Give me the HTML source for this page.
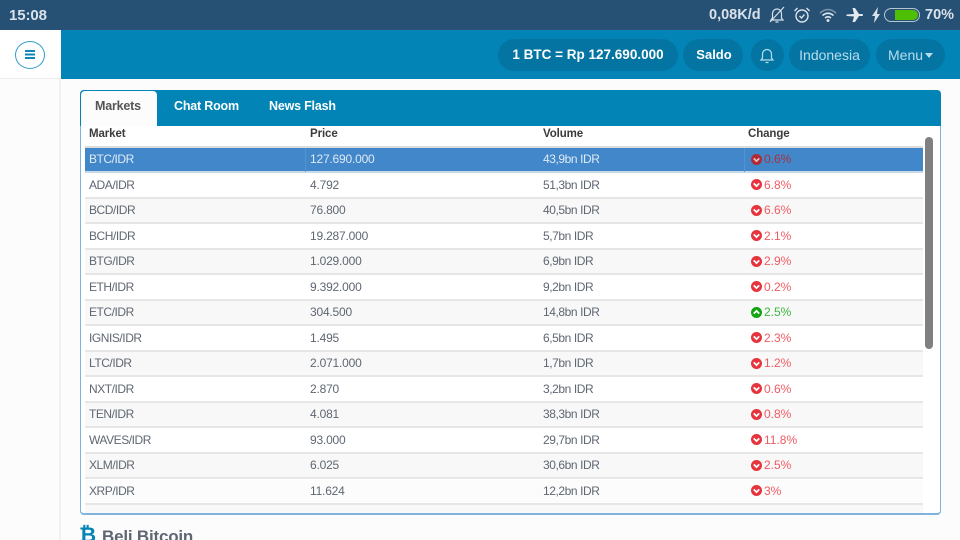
<!DOCTYPE html>
<html><head><meta charset="utf-8">
<style>
html,body{margin:0;padding:0;width:960px;height:540px;overflow:hidden}
body{background:#fcfcfc;font-family:"Liberation Sans",sans-serif;color:#5f6772;font-size:12px}
#w{position:absolute;left:0;top:0;width:960px;height:540px;overflow:hidden}
.a{position:absolute}
.pill{position:absolute;top:39px;height:32px;border-radius:16px;background:#0475a3;line-height:32px;text-align:center;font-size:13.5px;color:#fff;font-weight:bold}
.pill.l{font-weight:normal;color:#b9dcec;font-size:14px}
.row{position:absolute;left:85px;width:838px;height:25.45px;box-sizing:border-box;border-bottom:2px solid #e6e6e6}
.row.o{background:#f8f8f8}
.row span{position:absolute;top:0;line-height:22px;white-space:nowrap}
.row .m{left:4px;letter-spacing:-.45px}.row .p{left:225px;letter-spacing:-.2px}.row .v{left:458px;letter-spacing:-.42px}
.row .c{left:679px;color:#ef5b63}
.row .c.g{color:#3fb53f}
.row svg{position:absolute;left:666px;top:5.5px;width:11px;height:11px}
.row.sel{background:#4287c9;color:#dfeaf5;border-bottom:2px solid #c9d9e8}
.row.sel .c{color:#a8323f}
.th{position:absolute;top:126px;font-size:11.5px;font-weight:bold;color:#3c3c3c;line-height:14px;letter-spacing:-.1px}
.tab{position:absolute;top:99px;font-size:12.5px;font-weight:bold;color:#fff;line-height:14px;letter-spacing:-.2px}
</style></head><body><div id="w">
<!-- status bar -->
<div class="a" style="left:0;top:0;width:960px;height:30px;background:#265074"></div>
<div class="a" style="left:9px;top:7px;font-size:15px;font-weight:bold;color:#d9e2ea;line-height:17px;letter-spacing:-.1px">15:08</div>
<div class="a" style="left:709px;top:7px;font-size:14.5px;font-weight:bold;color:#d9e2ea;line-height:17px">0,08K/d</div>
<svg class="a" style="left:768px;top:6px" width="18" height="18" viewBox="0 0 18 18" fill="none" stroke="#d9e2ea" stroke-width="1.2"><path d="M3 14h12l-1.5-2V7.500C13.500 5 11.500 3 9 3S4.500 5 4.500 7.500V12z"/><path d="M7.500 16h3M2 16L16 1"/></svg>
<svg class="a" style="left:793px;top:6px" width="18" height="18" viewBox="0 0 18 18" fill="none" stroke="#d9e2ea" stroke-width="1.4"><circle cx="9" cy="10" r="6"/><path d="M6.500 10l2 2 3-3.500M1.500 5L4.500 2M16.500 5l-3-3"/></svg>
<svg class="a" style="left:818px;top:7px" width="20" height="16" viewBox="0 0 20 16" fill="none"><path d="M2 6Q10-1 18 6" stroke="#7f98ad" stroke-width="1.500"/><path d="M4.500 8.500Q10 4 15.500 8.500" stroke="#d9e2ea" stroke-width="1.700"/><path d="M7 11Q10 8.500 13 11" stroke="#d9e2ea" stroke-width="1.700"/><circle cx="10" cy="13.500" r="1.500" fill="#d9e2ea"/></svg>
<svg class="a" style="left:846px;top:6px" width="18" height="18" viewBox="0 0 18 18" fill="#e4eaef"><path d="M0.500 8.500L8 8 6.500 2H9l4 6h3.500q1 1 0 2H13l-4 6H6.500L8 10.500 0.500 10z"/></svg>
<svg class="a" style="left:871px;top:7px" width="10" height="16" viewBox="0 0 10 16" fill="#d9e2ea"><path d="M7 0L1 9h3L3 16l6-9H6z"/></svg>
<div class="a" style="left:884px;top:8px;width:36px;height:14px;box-sizing:border-box;border:1.500px solid #b5c5d2;border-radius:7px"></div>
<div class="a" style="left:895px;top:10px;width:23px;height:10px;background:#4fbf06;border-radius:0 5px 5px 0"></div>
<div class="a" style="left:925px;top:7px;font-size:14.500px;font-weight:bold;color:#d9e2ea;line-height:17px">70%</div>
<!-- header -->
<div class="a" style="left:0;top:30px;width:61px;height:49px;background:#fff;border-bottom:1px solid #eee;box-sizing:border-box"></div>
<div class="a" style="left:61px;top:30px;width:899px;height:49px;background:#0284b6"></div>
<div class="a" style="left:59px;top:79px;width:2px;height:461px;background:#f1f1f1"></div>
<div class="a" style="left:15px;top:41px;width:30px;height:28px;box-sizing:border-box;border:1.500px solid #2f9ccb;border-radius:50%"></div>
<div class="a" style="left:25px;top:50px;width:10px;height:2px;background:#0c86bb;box-shadow:0 3.500px 0 #0c86bb,0 7px 0 #0c86bb"></div>
<div class="pill" style="left:498px;width:180px">1 BTC = Rp 127.690.000</div>
<div class="pill" style="left:683px;width:60px;font-size:13px;padding-left:2px;box-sizing:border-box">Saldo</div>
<div class="pill" style="left:751px;width:33px"></div>
<svg class="a" style="left:759px;top:47px" width="16" height="17" viewBox="0 0 16 17" fill="none" stroke="#b9dcec" stroke-width="1.200"><path d="M2 13h12l-1.500-2V7C12.500 4.500 10.500 2.500 8 2.500S3.500 4.500 3.500 7v4z"/><path d="M6.500 15.500h3"/></svg>
<div class="pill l" style="left:789px;width:81px">Indonesia</div>
<div class="pill l" style="left:876px;width:69px;text-align:left;padding-left:12px;box-sizing:border-box">Menu</div>
<div class="a" style="left:925px;top:53px;width:0;height:0;border-left:4.500px solid transparent;border-right:4.500px solid transparent;border-top:5px solid #b9dcec"></div>
<!-- panel -->
<div class="a" style="left:80px;top:90px;width:861px;height:425px;box-sizing:border-box;border:1px solid #7fb2dc;border-bottom:2px solid #7fb2dc;border-radius:4px;background:#fff"></div>
<div class="th" style="left:89px;top:127px">Market</div>
<div class="th" style="left:310px;top:127px">Price</div>
<div class="th" style="left:543px;top:127px">Volume</div>
<div class="th" style="left:748px;top:127px">Change</div>
<div class="a" style="left:80px;top:90px;width:861px;height:36px;background:#0284b6;border-radius:4px 4px 0 0"></div>
<div class="a" style="left:81px;top:91px;width:76px;height:35px;background:#fcfcfc;border-radius:4px 4px 0 0"></div>
<div class="tab" style="left:95px;color:#555">Markets</div>
<div class="tab" style="left:174px">Chat Room</div>
<div class="tab" style="left:269px">News Flash</div>
<div class="a" style="left:85px;top:146px;width:838px;height:2px;background:#dcdcdc"></div>

<div class="row sel" style="top:148px"><span class="m">BTC/IDR</span><span class="p">127.690.000</span><span class="v">43,9bn IDR</span><svg viewBox="0 0 10 10"><circle cx="5" cy="5" r="5" fill="#b02a37"/><path d="M2.500 4L5 6.500 7.500 4" fill="none" stroke="#e8b8bc" stroke-width="1.600"/></svg><span class="c">0.6%</span></div>
<div class="a" style="left:305px;top:148px;width:1px;height:24px;background:#5592cf"></div>
<div class="a" style="left:744px;top:148px;width:1px;height:24px;background:#5592cf"></div>

<div class="row" style="top:173.500px"><span class="m">ADA/IDR</span><span class="p">4.792</span><span class="v">51,3bn IDR</span><svg viewBox="0 0 10 10"><circle cx="5" cy="5" r="5" fill="#e5343d"/><path d="M2.500 4L5 6.500 7.500 4" fill="none" stroke="#fff" stroke-width="1.600"/></svg><span class="c">6.8%</span></div>
<div class="row o" style="top:199px"><span class="m">BCD/IDR</span><span class="p">76.800</span><span class="v">40,5bn IDR</span><svg viewBox="0 0 10 10"><circle cx="5" cy="5" r="5" fill="#e5343d"/><path d="M2.500 4L5 6.500 7.500 4" fill="none" stroke="#fff" stroke-width="1.600"/></svg><span class="c">6.6%</span></div>
<div class="row" style="top:224.500px"><span class="m">BCH/IDR</span><span class="p">19.287.000</span><span class="v">5,7bn IDR</span><svg viewBox="0 0 10 10"><circle cx="5" cy="5" r="5" fill="#e5343d"/><path d="M2.500 4L5 6.500 7.500 4" fill="none" stroke="#fff" stroke-width="1.600"/></svg><span class="c">2.1%</span></div>
<div class="row o" style="top:250px"><span class="m">BTG/IDR</span><span class="p">1.029.000</span><span class="v">6,9bn IDR</span><svg viewBox="0 0 10 10"><circle cx="5" cy="5" r="5" fill="#e5343d"/><path d="M2.500 4L5 6.500 7.500 4" fill="none" stroke="#fff" stroke-width="1.600"/></svg><span class="c">2.9%</span></div>
<div class="row" style="top:275.500px"><span class="m">ETH/IDR</span><span class="p">9.392.000</span><span class="v">9,2bn IDR</span><svg viewBox="0 0 10 10"><circle cx="5" cy="5" r="5" fill="#e5343d"/><path d="M2.500 4L5 6.500 7.500 4" fill="none" stroke="#fff" stroke-width="1.600"/></svg><span class="c">0.2%</span></div>
<div class="row o" style="top:301px"><span class="m">ETC/IDR</span><span class="p">304.500</span><span class="v">14,8bn IDR</span><svg viewBox="0 0 10 10"><circle cx="5" cy="5" r="5" fill="#12a512"/><path d="M2.500 6L5 3.500 7.500 6" fill="none" stroke="#fff" stroke-width="1.600"/></svg><span class="c g">2.5%</span></div>
<div class="row" style="top:326.500px"><span class="m">IGNIS/IDR</span><span class="p">1.495</span><span class="v">6,5bn IDR</span><svg viewBox="0 0 10 10"><circle cx="5" cy="5" r="5" fill="#e5343d"/><path d="M2.500 4L5 6.500 7.500 4" fill="none" stroke="#fff" stroke-width="1.600"/></svg><span class="c">2.3%</span></div>
<div class="row o" style="top:352px"><span class="m">LTC/IDR</span><span class="p">2.071.000</span><span class="v">1,7bn IDR</span><svg viewBox="0 0 10 10"><circle cx="5" cy="5" r="5" fill="#e5343d"/><path d="M2.500 4L5 6.500 7.500 4" fill="none" stroke="#fff" stroke-width="1.600"/></svg><span class="c">1.2%</span></div>
<div class="row" style="top:377.500px"><span class="m">NXT/IDR</span><span class="p">2.870</span><span class="v">3,2bn IDR</span><svg viewBox="0 0 10 10"><circle cx="5" cy="5" r="5" fill="#e5343d"/><path d="M2.500 4L5 6.500 7.500 4" fill="none" stroke="#fff" stroke-width="1.600"/></svg><span class="c">0.6%</span></div>
<div class="row o" style="top:403px"><span class="m">TEN/IDR</span><span class="p">4.081</span><span class="v">38,3bn IDR</span><svg viewBox="0 0 10 10"><circle cx="5" cy="5" r="5" fill="#e5343d"/><path d="M2.500 4L5 6.500 7.500 4" fill="none" stroke="#fff" stroke-width="1.600"/></svg><span class="c">0.8%</span></div>
<div class="row" style="top:428.500px"><span class="m">WAVES/IDR</span><span class="p">93.000</span><span class="v">29,7bn IDR</span><svg viewBox="0 0 10 10"><circle cx="5" cy="5" r="5" fill="#e5343d"/><path d="M2.500 4L5 6.500 7.500 4" fill="none" stroke="#fff" stroke-width="1.600"/></svg><span class="c">11.8%</span></div>
<div class="row o" style="top:454px"><span class="m">XLM/IDR</span><span class="p">6.025</span><span class="v">30,6bn IDR</span><svg viewBox="0 0 10 10"><circle cx="5" cy="5" r="5" fill="#e5343d"/><path d="M2.500 4L5 6.500 7.500 4" fill="none" stroke="#fff" stroke-width="1.600"/></svg><span class="c">2.5%</span></div>
<div class="row" style="top:479.500px;background:#fcfcfc"><span class="m">XRP/IDR</span><span class="p">11.624</span><span class="v">12,2bn IDR</span><svg viewBox="0 0 10 10"><circle cx="5" cy="5" r="5" fill="#e5343d"/><path d="M2.500 4L5 6.500 7.500 4" fill="none" stroke="#fff" stroke-width="1.600"/></svg><span class="c">3%</span></div>
<div class="a" style="left:85px;top:505px;width:838px;height:8px;background:#f8f8f8"></div>
<!-- scrollbar -->
<div class="a" style="left:925px;top:137px;width:8px;height:212px;background:#808080;border-radius:4px"></div>
<!-- footer heading -->
<div class="a" style="left:79px;top:524px;font-size:21px;font-weight:bold;color:#0284b6;line-height:24px">₿</div>
<div class="a" style="left:102px;top:526px;font-size:17px;font-weight:bold;color:#5f6772;line-height:22px;letter-spacing:-.2px">Beli Bitcoin</div>
</div></body></html>
